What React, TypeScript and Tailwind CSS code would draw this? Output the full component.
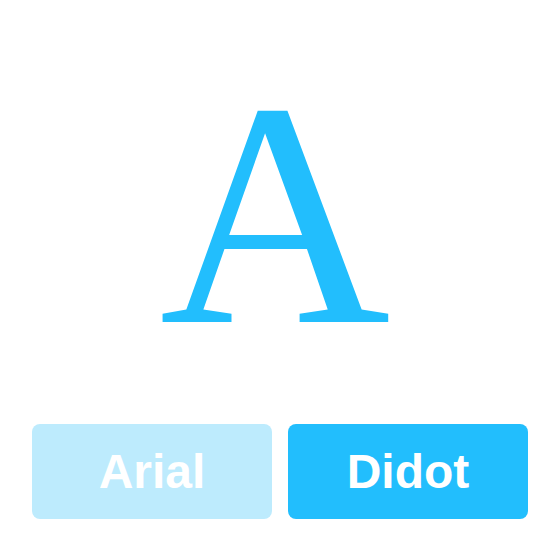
import React from 'react';

export default function App() {
  return (
    <div className="w-[560px] h-[560px] bg-white flex flex-col font-['Liberation_Sans',Arial,sans-serif]">
      <div className="pt-[54px] pr-[10px] flex justify-center">
        <span className="h-[320px] text-[320px] leading-none text-[#22befd] font-['Liberation_Serif','Times_New_Roman',serif]">
          A
        </span>
      </div>
      <div className="mt-auto px-8 pb-[41px] grid grid-cols-2 gap-4">
        <button className="h-[95px] rounded-lg bg-[#bdebfd] text-white text-[48px] font-bold">
          Arial
        </button>
        <button className="h-[95px] rounded-lg bg-[#22befd] text-white text-[48px] font-bold">
          Didot
        </button>
      </div>
    </div>
  );
}
